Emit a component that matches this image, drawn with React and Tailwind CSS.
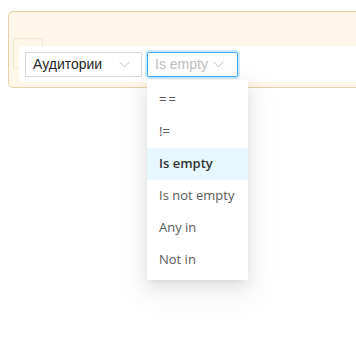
import React from "react";

const options = ["==", "!=", "Is empty", "Is not empty", "Any in", "Not in"];

function Chevron({ className }) {
  return (
    <svg width="11" height="7" viewBox="0 0 11 7" className={className} fill="none">
      <path d="M0.5 0.8 L5.5 5.8 L10.5 0.8" stroke="currentColor" strokeWidth="1" />
    </svg>
  );
}

export default function App() {
  const selected = "Is empty";

  return (
    <div className="relative w-[356px] h-[344px] bg-white overflow-hidden" style={{ fontFamily: '"Liberation Sans", Arial, sans-serif' }}>
      {/* Filter panel */}
      <div className="absolute left-[8px] top-[11px] w-[380px] h-[77px] rounded-[5px] border border-[#e6d2a6] bg-[#fdf6e9]">
        <div className="absolute left-[4px] top-[26px] w-[30px] h-[31px] rounded-[3px] border border-[#f2e8d2]" />
        <div className="relative mt-[34px] ml-[10px] h-[36px] rounded-l-[4px] bg-white flex items-center pl-[6px] gap-[5px]">
          <div className="w-[117px] h-[25px] border border-[#d9d9d9] flex items-center justify-between pl-[7px] pr-[11px] text-[14px] text-[#262626]">
            <span>Аудитории</span>
            <Chevron className="text-[#bfbfbf]" />
          </div>
          <div className="w-[91px] h-[25px] rounded-[2px] border border-[#40a9ff] shadow-[0_0_0_2px_rgba(24,144,255,0.2)] flex items-center justify-between pl-[7px] pr-[13px] text-[14px] text-[#bfbfbf]">
            <span>Is empty</span>
            <Chevron className="text-[#bfbfbf]" />
          </div>
        </div>
      </div>

      {/* Dropdown menu */}
      <div
        className="absolute left-[147px] top-[80px] w-[101px] py-[4px] bg-white rounded-[2px] shadow-[0_3px_6px_-4px_rgba(0,0,0,0.12),0_6px_16px_0_rgba(0,0,0,0.08),0_9px_28px_8px_rgba(0,0,0,0.05)]"
        style={{ fontFamily: '"Open Sans", "Noto Sans", sans-serif' }}
      >
        {options.map((opt) => (
          <div
            key={opt}
            className={
              opt === selected
                ? "h-[32px] flex items-center pl-[12px] text-[13px] font-semibold text-[#333333] bg-[#e6f7ff]"
                : opt === "=="
                  ? "h-[32px] flex items-center pl-[12px] text-[13px] tracking-[2px] text-[#595959]"
                  : "h-[32px] flex items-center pl-[12px] text-[13px] text-[#595959]"
            }
          >
            {opt}
          </div>
        ))}
      </div>
    </div>
  );
}
